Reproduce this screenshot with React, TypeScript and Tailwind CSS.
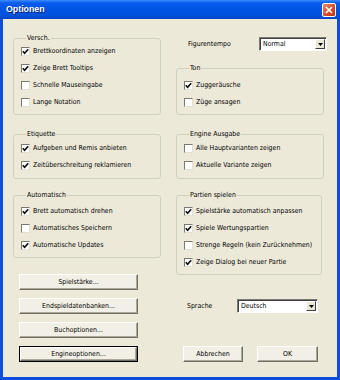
import React from "react";

function Check({ checked, label }: { checked?: boolean; label: string }) {
  return (
    <div className="flex h-[17px] items-center">
      <span className="flex h-[9px] w-[9px] items-center justify-center border border-b-[#e2e0d4] border-l-[#7a7a72] border-r-[#e2e0d4] border-t-[#7a7a72] bg-white">
        {checked && (
          <svg width="7" height="7" viewBox="0 0 7 7">
            <polyline points="0.8,3.2 2.6,5.2 6.2,1.2" fill="none" stroke="#111" strokeWidth="1.7" />
          </svg>
        )}
      </span>
      <span className="ml-[3px] whitespace-nowrap">{label}</span>
    </div>
  );
}

function Group({
  title,
  children,
  className,
}: {
  title: string;
  children: React.ReactNode;
  className: string;
}) {
  return (
    <fieldset className={"rounded-[3px] border border-[#d0d0bf] px-[7px] " + className}>
      <legend className="ml-[5px] px-[1px] leading-[10px]">{title}</legend>
      {children}
    </fieldset>
  );
}

function Button({ label, def, className }: { label: string; def?: boolean; className: string }) {
  return (
    <div className={(def ? "border border-black " : "") + className}>
      <div className="flex h-full w-full items-center justify-center border border-b-[#716f64] border-l-white border-r-[#716f64] border-t-white bg-[#f2f0e6] shadow-[inset_-1px_-1px_0_#aca899]">
        {label}
      </div>
    </div>
  );
}

function Select({ value, className }: { value: string; className: string }) {
  return (
    <div
      className={
        "flex items-center border border-b-white border-l-[#7a7a72] border-r-white border-t-[#7a7a72] bg-white shadow-[inset_1px_1px_0_#404040] " +
        className
      }
    >
      <span className="flex-1 pl-[3px] pt-[1px]">{value}</span>
      <div className="mr-[1px] flex h-[10px] w-[10px] items-center justify-center border border-b-[#404040] border-l-white border-r-[#404040] border-t-white bg-[#ece9d8]">
        <svg width="5" height="3" viewBox="0 0 5 3">
          <polygon points="0,0 5,0 2.5,3" fill="#000" />
        </svg>
      </div>
    </div>
  );
}

export default function App() {
  return (
    <div className="flex h-[380px] w-[340px] flex-col bg-[#0a4fdc] font-['DejaVu_Sans_Condensed','Liberation_Sans',sans-serif] text-[6.9px] text-black">
      <div className="flex h-[19px] items-center justify-between bg-[linear-gradient(#3d8dfd_0%,#0a5cef_15%,#0054e3_50%,#0050da_85%,#0041c2_100%)]">
        <span className="pl-[6px] font-['Liberation_Sans',sans-serif] text-[8.8px] font-bold text-white [text-shadow:1px_1px_0_#0a1f70]">
          Optionen
        </span>
        <div className="mr-[4px] flex h-[14px] w-[14px] items-center justify-center rounded-[2px] border border-white bg-[linear-gradient(135deg,#e98b6c,#d44a24_60%,#b8361a)]">
          <svg width="8" height="8" viewBox="0 0 8 8">
            <path d="M1 1 L7 7 M7 1 L1 7" stroke="#fff" strokeWidth="1.6" />
          </svg>
        </div>
      </div>
      <div className="mx-[3px] mb-[3px] flex flex-1 gap-[15px] bg-[#ece9d8] pl-[10px] pt-[14px]">
        {/* left column */}
        <div className="flex w-[148px] flex-col">
          <Group title="Versch." className="pb-[3px]">
            <Check checked label="Brettkoordinaten anzeigen" />
            <Check checked label="Zeige Brett Tooltips" />
            <Check label="Schnelle Mauseingabe" />
            <Check label="Lange Notation" />
          </Group>
          <Group title="Etiquette" className="mt-[14px] pb-[4px] pt-[1px]">
            <Check checked label="Aufgeben und Remis anbieten" />
            <Check checked label="Zeitüberschreitung reklamieren" />
          </Group>
          <Group title="Automatisch" className="mt-[11px] pb-[3px] pt-[3px]">
            <Check checked label="Brett automatisch drehen" />
            <Check label="Automatisches Speichern" />
            <Check checked label="Automatische Updates" />
          </Group>
          <div className="mt-[16px] flex flex-col gap-[8px] pl-[6px]">
            <Button label="Spielstärke..." className="h-[16px] w-[119px]" />
            <Button label="Endspieldatenbanken..." className="h-[16px] w-[119px]" />
            <Button label="Buchoptionen..." className="h-[16px] w-[119px]" />
            <Button label="Engineoptionen..." def className="h-[16px] w-[119px]" />
          </div>
        </div>
        {/* right column */}
        <div className="flex w-[151px] flex-col">
          <div className="mt-[4px] flex h-[14px] items-center pl-[12px]">
            <span className="w-[71px]">Figurentempo</span>
            <Select value="Normal" className="h-[14px] w-[68px]" />
          </div>
          <Group title="Ton" className="mt-[12px] w-[148px] pb-[3px] pt-[4px]">
            <Check checked label="Zuggeräusche" />
            <Check label="Züge ansagen" />
          </Group>
          <Group title="Engine Ausgabe" className="mt-[14px] w-[148px] pb-[4px] pt-[1px]">
            <Check label="Alle Hauptvarianten zeigen" />
            <Check label="Aktuelle Variante zeigen" />
          </Group>
          <Group title="Partien spielen" className="mt-[11px] w-[146px] pb-[3px] pt-[3px]">
            <Check checked label="Spielstärke automatisch anpassen" />
            <Check checked label="Spiele Wertungspartien" />
            <Check label="Strenge Regeln (kein Zurücknehmen)" />
            <Check checked label="Zeige Dialog bei neuer Partie" />
          </Group>
          <div className="mt-[24px] flex h-[14px] items-center pl-[11px]">
            <span className="w-[50px]">Sprache</span>
            <Select value="Deutsch" className="h-[14px] w-[81px]" />
          </div>
          <div className="mt-[33px] flex gap-[14px] pl-[7px]">
            <Button label="Abbrechen" className="h-[16px] w-[60px]" />
            <Button label="OK" className="h-[16px] w-[61px]" />
          </div>
        </div>
      </div>
    </div>
  );
}
